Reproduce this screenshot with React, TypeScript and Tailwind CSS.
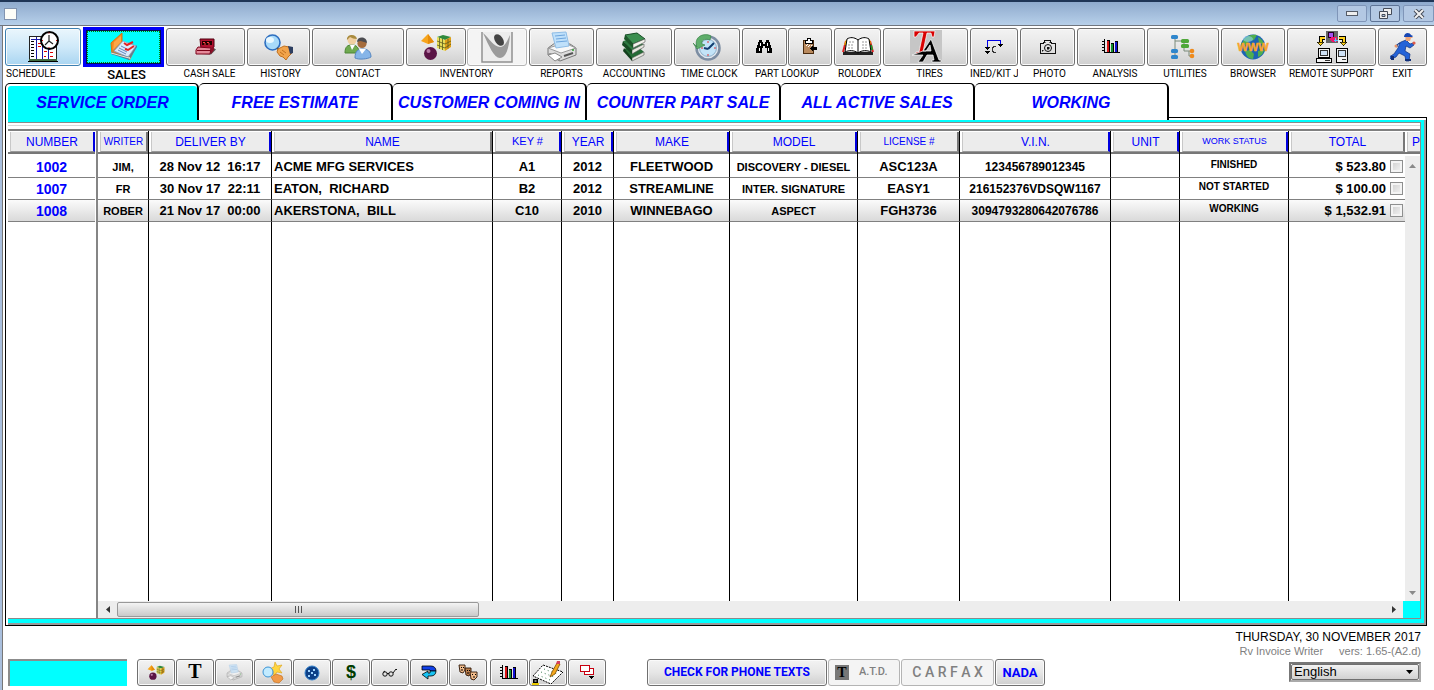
import React, { useState } from 'react';
import clsx from 'clsx';
import { twMerge } from 'tailwind-merge';

/* ---------- Toolbar drawings ---------- */

const ScheduleIcon = () => (
  <svg width="32" height="32" viewBox="0 0 32 32" shapeRendering="crispEdges">
    <rect x="2" y="5" width="27" height="24" fill="#fff" stroke="#222" />
    <path d="M2 28h28v2H2z" fill="#3f6b3f" />
    <path d="M1 30h30v1H1z" fill="#000" />
    <path d="M4 10.500h3M4 13.500h3M4 16.500h3M4 19.500h3M4 22.500h3M4 25.500h3" stroke="#000" />
    <path d="M9.500 6v22M15.500 6v22M4 8.500h11M21.500 18v10" stroke="#1a1aa8" />
    <path d="M11 12.500h3M11 15.500h3M17 20.500h3M23 21.500h3M17 25.500h2M23 25.500h3" stroke="#e00000" />
    <g shapeRendering="auto">
      <circle cx="22.500" cy="9.500" r="8.500" fill="#fff" stroke="#000" strokeWidth="2" />
      <path d="M22 4v6l-4 4M22 10l4 3" stroke="#222" strokeWidth="1.200" fill="none" />
      <path d="M22 1.500v1M22 16v1M15 9.500h1M29 9.500h1" stroke="#c00" />
    </g>
  </svg>
);

const SalesIcon = () => (
  <svg width="28" height="30" viewBox="0 0 28 30">
    <path d="M1 11 12 1v13L2 22z" fill="#f58a1e" stroke="#d8720f" />
    <path d="m4 10 7-6v10l-8 6z" fill="#fba748" />
    <path d="M1 20 12 9l15 5-7 14z" fill="#c9843c" />
    <path d="m4 19 9-10 13 5-8 11z" fill="#dcebfb" stroke="#7fa3cf" strokeWidth=".8" />
    <path d="m19 28 8-13v-2l-8 12L1 20v2z" fill="#4d7fa5" />
    <path d="m19 25 1 2M1 21l18 5" stroke="#f6e8c8" />
    <path d="m8 18 8 4M9 16l8 4M11 14l6 3" stroke="#5f86bf" />
    <path d="m14 11 3 2 6-3M15 17l3 1 6-4" stroke="#e32222" strokeWidth="2" fill="none" />
  </svg>
);

const RegisterIcon = () => (
  <svg width="22" height="18" viewBox="0 0 22 18">
    <path d="m6 16 10 .5 5-5-3-2z" fill="#555" />
    <path d="M5 1h14v8l-3 2H6z" fill="#b01030" stroke="#500010" />
    <path d="M7 3h10v4H7z" fill="#200" />
    <path d="M8 4.500h2M12 4.500h2M9 6h2M13 6h2" stroke="#ff4040" />
    <path d="m3 9 13 1-1 6H1v-4z" fill="#e58a9a" stroke="#7a0018" />
    <path d="M2 12.500h13" stroke="#7a0018" />
    <path d="m16 10 3-2v4l-3 4z" fill="#8c1028" />
  </svg>
);

const HistoryIcon = () => (
  <svg width="32" height="26" viewBox="0 0 32 26">
    <circle cx="9.500" cy="8.500" r="7.500" fill="#a8dafa" stroke="#2f6fc0" strokeWidth="1.600" />
    <ellipse cx="7" cy="6" rx="4" ry="3" fill="#e9f8ff" />
    <path d="m14 14 5 4" stroke="#555" strokeWidth="2" />
    <path d="m15 15 6-3 5 1 3 6-4 4-2 3-3-3-3-1-3-4z" fill="#f2a44c" stroke="#c07020" />
    <path d="m25 12 5 1v6l-3 1z" fill="#2d3e60" />
    <path d="m17 18 4 3M19 16l4 3" stroke="#c07020" />
  </svg>
);

const ContactIcon = () => (
  <svg width="28" height="26" viewBox="0 0 28 26">
    <path d="M1 19c0-7 3-8 7-8s7 2 7 8z" fill="#6faa4f" stroke="#4c8534" />
    <path d="m6 11 2 5 3-5z" fill="#fff" />
    <circle cx="8" cy="6" r="4.500" fill="#f0cfa0" />
    <path d="M3 6c-1-6 9-7 10-1-3 0-5-1-7-2-1 1-2 2-3 3z" fill="#a98b3e" />
    <path d="M11 24c0-7 3-9 8-9 4 0 8 2 8 8-3 2-12 3-16 1z" fill="#86b5e8" stroke="#5686c0" />
    <path d="m15 15 3 5 4-5z" fill="#fff" />
    <circle cx="18" cy="9.500" r="4.600" fill="#a56c3c" />
    <path d="M13 8c0-6 10-6 10 1-3-1-5-2-7-2z" fill="#4c4c50" />
  </svg>
);

const ShapesIcon = ({ width = 32, height = 28 }: { width?: number; height?: number }) => (
  <svg width={width} height={height} viewBox="0 0 32 28">
    <path d="m1 8 7-7 6 8-6 2z" fill="#f7a51c" />
    <path d="m8 1 6 8-6 2z" fill="#e58b0c" />
    <circle cx="10.500" cy="20.500" r="6.500" fill="#5b1446" />
    <circle cx="8.500" cy="18" r="2" fill="#b77aa6" />
    <path d="m17 4 6-2 8 2-6 3z" fill="#2e8a3c" />
    <path d="m17 4 8 3v11l-8-3z" fill="#e8df5a" />
    <path d="m25 7 6-3v10l-6 4z" fill="#e0a018" />
    <path d="M19.500 5v11M22.500 6v11M17 8l8 3 6-3M17 12l8 3 6-4M28 5.500v10" stroke="#5b5a20" strokeWidth=".8" fill="none" />
  </svg>
);

const FigureIcon = () => (
  <svg width="34" height="34" viewBox="0 0 34 34">
    <path d="M2 2h30v30H2z" fill="#ededed" />
    <path d="M2 2v30h30V2" fill="none" stroke="#909090" strokeWidth="1.500" />
    <path d="M3 3c6 5 11 14 17 14 5 0 7-6 10-12-1 13-4 23-10 23S9 16 3 3z" fill="#9b9b9b" />
    <ellipse cx="19" cy="10" rx="4" ry="6.500" transform="rotate(-35 19 10)" fill="#444" />
  </svg>
);

const PrinterIcon = ({ size = 32 }: { size?: number }) => (
  <svg width={size} height={size} viewBox="0 0 32 32">
    <path d="m2 17 7-5 15 1 6 4v7l-16 6-12-6z" fill="#dcdcdc" stroke="#777" />
    <path d="m2 17 13 5 15-5-7-3-14 1z" fill="#f8f8f8" stroke="#999" />
    <path d="m6 2 14-1 3 14-13 2z" fill="#bfe0fa" stroke="#8fbde6" />
    <path d="m9 5 10-1M10 8l10-1M10 11l11-1" stroke="#6da5dd" />
    <path d="m4 22 10 4v3l-12-6z" fill="#8a8a8a" />
    <path d="m2 24 7-2 7 4-7 4z" fill="#fff" stroke="#888" />
    <path d="m18 25 9-3" stroke="#555" strokeWidth="2" />
    <circle cx="27" cy="19" r="1" fill="#2ca02c" />
  </svg>
);

const BooksIcon = () => (
  <svg width="26" height="30" viewBox="0 0 26 30">
    <path d="m3 17 12-4 8 7-12 8z" fill="#256b35" />
    <path d="m11 26 12-6v3l-12 6z" fill="#e8e8e0" stroke="#555" strokeWidth=".6" />
    <path d="m3 16 8 10v3L2 19z" fill="#123f1c" />
    <path d="m2 9 13-3 8 7-12 7z" fill="#2d7a40" />
    <path d="m11 18 12-6v3l-12 7z" fill="#e8e8e0" stroke="#555" strokeWidth=".6" />
    <path d="m2 9 9 9v4L1 13z" fill="#164a22" />
    <path d="m4 3 12-2 8 6-12 5z" fill="#3b8f50" stroke="#174d25" />
    <path d="m12 12 12-5v3l-12 6z" fill="#f3f3ec" stroke="#555" strokeWidth=".6" />
    <path d="m4 3 8 9v4L3 7z" fill="#1c5729" />
  </svg>
);

const TimeClockIcon = () => (
  <svg width="28" height="28" viewBox="0 0 28 28">
    <circle cx="15" cy="15" r="11.500" fill="#e2e8ef" stroke="#7d8ea3" strokeWidth="2.500" />
    <circle cx="15" cy="15" r="8.500" fill="#c3e4f8" stroke="#8fb2cc" />
    <path d="M15 16 21 10M15 16l-4-1" stroke="#123d70" strokeWidth="2" />
    <path d="M15 8v2M15 21v2M8 15h2M21 15h2" stroke="#d33" />
    <path d="M4 14C0 4 11-1 18 3l-1 4C11 5 8 8 9 11l3 1-8 4-4-6z" fill="#5fae6b" stroke="#3b8549" strokeWidth=".7" />
  </svg>
);

const BinocularsIcon = () => (
  <svg width="16" height="14" viewBox="0 0 16 14" shapeRendering="crispEdges">
    <path d="M3 0h3v2h1v2h2V2h1V0h3v2h1v3h1v3h1v5h-5V8H9V6H7v2H6v5H0V8h1V5h1V2h1z" fill="#000" />
    <path d="M4.500 3v3M3.500 8v3M11.500 3v3M12.500 8v3" stroke="#fff" />
  </svg>
);

const ClipboardIcon = () => (
  <svg width="14" height="17" viewBox="0 0 14 17" shapeRendering="crispEdges">
    <rect x="0.500" y="2.500" width="10" height="13" fill="#b98a5e" stroke="#4a2c10" />
    <path d="M4 0h3v2h2v3H2V2h2z" fill="#fff" stroke="#000" />
    <path d="m3 8 2-2M5 9l2-2M8 7l1 1" stroke="#fff" />
    <path d="M14 9v3H10v2l-3-3.500L10 7v2z" fill="#000" />
  </svg>
);

const RolodexIcon = () => (
  <svg width="32" height="20" viewBox="0 0 32 20">
    <path d="M1 15h30v3H1z" fill="#222" />
    <path d="M4 4 1 15M28 4l3 11" stroke="#e02020" strokeWidth="2" />
    <path d="m5 3-2 5M27 3l1 4" stroke="#f2b400" strokeWidth="2" />
    <path d="m29 8 1 5" stroke="#1d9a2c" strokeWidth="2" />
    <path d="M16 3C12 0 8 0 5 2L3 15c4-2 9-2 13 1 4-3 9-3 13-1L27 2c-3-2-7-2-11 1z" fill="#fff" stroke="#000" />
    <path d="M16 3v13" stroke="#000" />
    <path d="M7 5h5M6 8h6M6 11h6M20 5h5M20 8h6M20 11h6" stroke="#999" strokeDasharray="2 1" />
  </svg>
);

const TiresIcon = () => (
  <svg width="32" height="33" viewBox="0 0 32 33">
    <rect width="32" height="33" fill="#c6c6c6" />
    <path d="M4 1h21l-1 6h-2l-1-4h-4l-4 19h3v2H6v-2h3l4-19H9L6 7H4z" fill="#d80000" stroke="#fff" strokeWidth=".7" />
    <path d="m21 9 8 21h2v2h-9v-2h2l-1-5h-6l-4 7H8l5-7H2l11-4h8l-1-6-4 6h-3z" fill="#000" stroke="#fff" strokeWidth=".7" />
  </svg>
);

const KitIcon = () => (
  <svg width="20" height="16" viewBox="0 0 20 16" shapeRendering="crispEdges">
    <path d="M3.500 8V1.500h13V5" fill="none" stroke="#0000e8" />
    <path d="M1 8h5L3.500 11zM1 12h5L3.500 15zM14 5h5l-2.500 3z" fill="#000" />
    <path d="M12 7.500H9.500V8H8.500v4h1v1.500H12" fill="none" stroke="#333" />
  </svg>
);

const CameraIcon = () => (
  <svg width="18" height="16" viewBox="0 0 18 16" shapeRendering="crispEdges">
    <path d="M1.500 4.500h3l1-2v-1h6v1l1 2h4v10h-15z" fill="none" stroke="#111" />
    <circle cx="9" cy="9" r="3.500" fill="none" stroke="#111" shapeRendering="auto" />
    <path d="M8 8h2v2H8zM6 3h1M10 3h1M3 11h1v1H3z" fill="#111" stroke="#111" strokeWidth=".5" />
  </svg>
);

const BarsIcon = () => (
  <svg width="18" height="15" viewBox="0 0 18 15" shapeRendering="crispEdges">
    <path d="M2.500 0v13.500H18M0 2.500h2M0 5.500h2M0 8.500h2M0 11.500h2" stroke="#000" fill="none" />
    <path d="M5 1h3v12H5zM9 4h3v9H9zM13 2h3v11h-3z" fill="#000" />
    <path d="M5 2h2v11H5z" fill="#d81414" />
    <path d="M9 5h2v8H9z" fill="#12902c" />
    <path d="M13 3h2v10h-2z" fill="#1010d0" />
  </svg>
);

const UtilitiesIcon = () => (
  <svg width="24" height="26" viewBox="0 0 24 26">
    <path d="M4 3v19M4 7h8M13 8v9M13 17h5v5h2M18 17h2" stroke="#7a8a7a" fill="none" />
    <rect x="0" y="1" width="7" height="4" rx="1.500" fill="#2f86cc" />
    <rect x="10" y="5" width="8" height="4" rx="1.500" fill="#4fa83a" />
    <rect x="10" y="10" width="8" height="4" rx="1.500" fill="#4fa83a" />
    <rect x="0" y="15" width="7" height="4" rx="1.500" fill="#2f86cc" />
    <rect x="0" y="21" width="7" height="4" rx="1.500" fill="#2f86cc" />
    <circle cx="21" cy="17" r="2.300" fill="#ee8a1c" />
    <circle cx="21" cy="22" r="2.300" fill="#ee8a1c" />
  </svg>
);

const BrowserIcon = () => (
  <svg width="34" height="28" viewBox="0 0 34 28">
    <circle cx="17" cy="14" r="12.500" fill="#1c64b4" />
    <path d="M8 6c4-4 9-5 13-4l-3 5-5 1-3 4-4-1zM22 4c4 2 6 5 6 8l-5-2zM9 18l5-1 4 4-1 5c-4 0-7-3-8-8zM22 18l6-1c-1 4-3 6-6 7z" fill="#4fae4e" />
    <ellipse cx="12" cy="6" rx="5" ry="3" fill="#8fd0f2" opacity=".6" />
    <text x="17" y="18" textAnchor="middle" fontFamily="Liberation Sans, Arial, sans-serif" fontWeight="bold" fontSize="11" fill="#f9a52c" stroke="#f9a52c" strokeWidth=".5">WWW</text>
  </svg>
);

const RemoteIcon = () => (
  <svg width="32" height="32" viewBox="0 0 32 32" shapeRendering="crispEdges">
    <path d="M10 0h12v12H10z" fill="#666" />
    <circle cx="15" cy="4" r="3" fill="#a34ff0" stroke="#202" />
    <path d="M16 6h5v5h-5zM13 8l3-2v5z" fill="#f0146c" />
    <path d="M19.500 7v4M18 9.500h4" stroke="#50c8ff" />
    <path d="M9 6.500H4.500V12M23 6.500h4.500V12" stroke="#000" strokeWidth="4" fill="none" />
    <path d="M9 6.500H4.500V12M23 6.500h4.500V12" stroke="#ffd21c" strokeWidth="2" fill="none" />
    <path d="M1 11h7l-3.500 4zM24 11h7l-3.500 4z" fill="#ffd21c" stroke="#000" strokeWidth=".7" />
    <path d="M2.500 17.500h11v9h-11zM.500 27.500h15v4H.500zM20.500 17.500h11v14h-11z" fill="#f2f2f2" stroke="#000" />
    <path d="M4.500 19.500h7v5h-7zM22.500 19.500h7v6h-7z" fill="#cfe2f6" stroke="#333" />
    <path d="M9 29.500h5M26 28.500h4" stroke="#333" />
  </svg>
);

const RunnerIcon = () => (
  <svg width="26" height="30" viewBox="0 0 26 30">
    <path d="M11 10 16 8l4 4 3-1 1 2-4 3-4-2-1 5 5 3-1 7h-3l-1-5-6-3-3 4-5 2-2-2 5-3 4-6 2-5-2 1-1 3-2-1z" fill="#2463d8" stroke="#0c2f80" strokeWidth=".7" />
    <path d="M15 4c2-3 6-2 7 1l1 1h-2l-1 3h-4z" fill="#eea679" />
    <path d="M14 5c0-5 6-5 7-2l2 1-1 1z" fill="#1747b4" />
    <circle cx="24" cy="11" r="1.600" fill="#e05a48" />
    <circle cx="6" cy="14" r="1.500" fill="#e79468" />
    <path d="M1 24h3v4H1zM15 27h6v2h-6z" fill="#123078" />
  </svg>
);

/* ---------- Footer drawings ---------- */

const SearchStarIcon = () => (
  <svg width="22" height="22" viewBox="0 0 22 22">
    <path d="m13 0 2 4 5-1-3 4 3 4-5-1-3 4-1-5-4-2 5-2z" fill="#ffd640" stroke="#dca010" strokeWidth=".6" />
    <circle cx="6" cy="10" r="5" fill="#c2ebff" stroke="#3b93d4" />
    <path d="m9 15 5-3 6 2 1 3-4 4-5-1z" fill="#f09a48" stroke="#c06a18" strokeWidth=".6" />
  </svg>
);

const BallIcon = () => (
  <svg width="16" height="16" viewBox="0 0 16 16">
    <circle cx="8" cy="8" r="7" fill="#0c3f86" stroke="#3482cc" />
    <path d="M4 5h2v2H4zM9 4h2v2H9zM7 7h2v2H7zM4 10h2v2H4zM10 9h2v2h-2z" fill="#9fd4ff" />
  </svg>
);

const GlassesIcon = () => (
  <svg width="16" height="9" viewBox="0 0 16 9">
    <circle cx="3" cy="6" r="2.200" fill="none" stroke="#111" />
    <circle cx="9" cy="6" r="2.200" fill="none" stroke="#111" />
    <path d="M5 5.500h2M11 5l3-4 1 1M1 4.500 3 3" stroke="#111" fill="none" />
  </svg>
);

const ReturnIcon = () => (
  <svg width="16" height="15" viewBox="0 0 16 15">
    <path d="M1 1h9c3 0 5 2 5 5H9V5H1z" fill="#1040e8" stroke="#000" strokeWidth=".8" />
    <path d="M15 6c0 3-2 5-5 5H7v3L1 9.500 7 6v2h2V6z" fill="#18c4f4" stroke="#000" strokeWidth=".8" />
  </svg>
);

const FacesIcon = () => (
  <svg width="20" height="17" viewBox="0 0 20 17">
    <g stroke="#2b1405" strokeWidth=".9">
      <path d="M1 1h6v5L5 9 2 8z" fill="#f3bd8c" />
      <path d="M7 4h6v5l-2 3-3-1z" fill="#bd7f4c" />
      <path d="M12 8h7v5l-3 3-3-1z" fill="#f3bd8c" />
    </g>
    <path d="M3 3.500h1M5 3.500h1M3 6h2M9 6.500h1M11 6.500h1M9 9h2M14 10.500h1M17 10.500h1M15 13h2" stroke="#000" />
  </svg>
);

const NotesIcon = () => (
  <svg width="32" height="24" viewBox="0 0 32 24">
    <path d="m1 15 10-11 20 7-12 12z" fill="#fff" stroke="#000" strokeDasharray="2 1" />
    <path d="m6 14 12 5M9 11l13 5M12 8l13 5" stroke="#3b7d50" strokeDasharray="1 3" />
    <path d="m18 16 2-5 5-9 3 1-5 10z" fill="#f5a81c" stroke="#7a4a00" strokeWidth=".8" />
    <path d="m24 3 1-3h3v3z" fill="#d4405c" />
    <path d="M1 18h5v5H1z" fill="#000" />
    <path d="M0 22h7v2H0z" fill="#e8c800" />
    <path d="M2.500 19.500h2v1h-2z" fill="#fff" />
  </svg>
);

const CascadeIcon = () => (
  <svg width="16" height="15" viewBox="0 0 16 15" shapeRendering="crispEdges">
    <path d="M5.500 3.500h9v6h-9z" fill="#fff" stroke="#c80010" />
    <path d="M1.500.500h9v6h-9z" fill="#fff" stroke="#c80010" />
    <path d="M9 11h6l-3 3z" fill="#000" />
  </svg>
);

/* ---------- Data ---------- */

interface ToolGroup {
  label: string;
  size: string;
  align?: string;
  tools: { name: string; icon: React.ReactNode; disabled?: boolean }[];
}

const toolGroups: ToolGroup[] = [
  { label: 'SCHEDULE', size: 'basis-[76px]', align: 'text-left pl-px', tools: [{ name: 'Schedule', icon: <ScheduleIcon /> }] },
  { label: 'SALES', size: 'basis-[81px]', tools: [{ name: 'Sales', icon: <SalesIcon /> }] },
  { label: 'CASH SALE', size: 'basis-[79px]', align: 'text-center pl-2', tools: [{ name: 'Cash sale', icon: <RegisterIcon /> }] },
  { label: 'HISTORY', size: 'basis-[63px]', align: 'text-center pl-1', tools: [{ name: 'History', icon: <HistoryIcon /> }] },
  { label: 'CONTACT', size: 'basis-[92px]', tools: [{ name: 'Contact', icon: <ContactIcon /> }] },
  {
    label: 'INVENTORY',
    size: 'basis-[121px]',
    tools: [
      { name: 'Inventory', icon: <ShapesIcon /> },
      { name: 'Inventory vendor', icon: <FigureIcon />, disabled: true },
    ],
  },
  { label: 'REPORTS', size: 'basis-[65px]', tools: [{ name: 'Reports', icon: <PrinterIcon /> }] },
  { label: 'ACCOUNTING', size: 'basis-[76px]', tools: [{ name: 'Accounting', icon: <BooksIcon /> }] },
  { label: 'TIME CLOCK', size: 'basis-[66px]', align: 'text-center pl-1', tools: [{ name: 'Time clock', icon: <TimeClockIcon /> }] },
  {
    label: 'PART LOOKUP',
    size: 'basis-[90px]',
    tools: [
      { name: 'Find part', icon: <BinocularsIcon /> },
      { name: 'Part list', icon: <ClipboardIcon /> },
    ],
  },
  { label: 'ROLODEX', size: 'basis-[47px]', align: 'text-center pl-1', tools: [{ name: 'Rolodex', icon: <RolodexIcon /> }] },
  { label: 'TIRES', size: 'basis-[85px]', align: 'text-center pl-2', tools: [{ name: 'Tires', icon: <TiresIcon /> }] },
  { label: 'INED/KIT J', size: 'basis-[48px]', tools: [{ name: 'Combined/kit jobs', icon: <KitIcon /> }] },
  { label: 'PHOTO', size: 'basis-[55px]', align: 'text-center pl-1', tools: [{ name: 'Photo', icon: <CameraIcon /> }] },
  { label: 'ANALYSIS', size: 'basis-[68px]', align: 'text-center pl-2', tools: [{ name: 'Analysis', icon: <BarsIcon /> }] },
  { label: 'UTILITIES', size: 'basis-[72px]', align: 'text-center pl-1', tools: [{ name: 'Utilities', icon: <UtilitiesIcon /> }] },
  { label: 'BROWSER', size: 'basis-[64px]', tools: [{ name: 'Browser', icon: <BrowserIcon /> }] },
  { label: 'REMOTE SUPPORT', size: 'basis-[89px]', tools: [{ name: 'Remote support', icon: <RemoteIcon /> }] },
  { label: 'EXIT', size: 'basis-[49px]', tools: [{ name: 'Exit', icon: <RunnerIcon /> }] },
];

const tabs = ['SERVICE ORDER', 'FREE ESTIMATE', 'CUSTOMER COMING IN', 'COUNTER PART SALE', 'ALL ACTIVE SALES', 'WORKING'];

const columns = [
  { key: 'writer', title: 'WRITER', col: 'w-[51px]', head: 'text-[10px]', cell: 'text-center text-[11px]', edge: false },
  { key: 'deliver', title: 'DELIVER BY', col: 'w-[123px]', head: 'text-[12px]', cell: 'text-center text-[13px]', edge: true },
  { key: 'name', title: 'NAME', col: 'w-[221px]', head: 'text-[12px]', cell: 'pl-0.5 text-left text-[13px]', edge: false },
  { key: 'keyNo', title: 'KEY #', col: 'w-[69px]', head: 'text-[11px]', cell: 'text-center text-[13px]', edge: true },
  { key: 'year', title: 'YEAR', col: 'w-[52px]', head: 'text-[12px]', cell: 'text-center text-[13px]', edge: true },
  { key: 'make', title: 'MAKE', col: 'w-[116px]', head: 'text-[12px]', cell: 'text-center text-[13px]', edge: true },
  { key: 'model', title: 'MODEL', col: 'w-[128px]', head: 'text-[12px]', cell: 'text-center text-[11px]', edge: true },
  { key: 'license', title: 'LICENSE #', col: 'w-[102px]', head: 'text-[10px]', cell: 'text-center text-[13px]', edge: false },
  { key: 'vin', title: 'V.I.N.', col: 'w-[151px]', head: 'text-[12px]', cell: 'text-center text-[12px]', edge: true },
  { key: 'unit', title: 'UNIT', col: 'w-[69px]', head: 'text-[12px]', cell: 'text-center text-[12px]', edge: true },
  { key: 'status', title: 'WORK STATUS', col: 'w-[109px]', head: 'text-[9px]', cell: 'pb-1 text-center text-[10px]', edge: true },
] as const;

type ColumnKey = (typeof columns)[number]['key'];
type Order = Record<ColumnKey, string> & { number: string; total: string };

const orders: Order[] = [
  { number: '1002', writer: 'JIM,', deliver: '28 Nov 12  16:17', name: 'ACME MFG SERVICES', keyNo: 'A1', year: '2012', make: 'FLEETWOOD', model: 'DISCOVERY - DIESEL', license: 'ASC123A', vin: '123456789012345', unit: '', status: 'FINISHED', total: '$ 523.80' },
  { number: '1007', writer: 'FR', deliver: '30 Nov 17  22:11', name: 'EATON,  RICHARD', keyNo: 'B2', year: '2012', make: 'STREAMLINE', model: 'INTER. SIGNATURE', license: 'EASY1', vin: '216152376VDSQW1167', unit: '', status: 'NOT STARTED', total: '$ 100.00' },
  { number: '1008', writer: 'ROBER', deliver: '21 Nov 17  00:00', name: 'AKERSTONA,  BILL', keyNo: 'C10', year: '2010', make: 'WINNEBAGO', model: 'ASPECT', license: 'FGH3736', vin: '3094793280642076786', unit: '', status: 'WORKING', total: '$ 1,532.91' },
];

const quickTools = [
  { name: 'Inventory items', icon: <ShapesIcon width={18} height={17} /> },
  { name: 'Text', icon: <span className="font-['Liberation_Serif',serif] text-[20px] leading-5 font-bold">T</span> },
  { name: 'Print', icon: <PrinterIcon size={17} />, dim: true },
  { name: 'Search favourites', icon: <SearchStarIcon /> },
  { name: 'Bowling', icon: <BallIcon /> },
  { name: 'Payments', icon: <span className="text-[18px] leading-5 font-bold text-[#003c00]">$</span> },
  { name: 'View', icon: <GlassesIcon /> },
  { name: 'Return', icon: <ReturnIcon /> },
  { name: 'People', icon: <FacesIcon /> },
];

const extraTools = [
  { name: 'Chart', icon: <BarsIcon /> },
  { name: 'Notes', icon: <NotesIcon /> },
  { name: 'Windows', icon: <CascadeIcon /> },
];

/* ---------- Components ---------- */

const face = 'flex items-center justify-center overflow-hidden rounded-[3px] border border-[#707070] bg-linear-to-b from-[#f3f3f3] via-[#e6e6e6] to-[#cfcfcf] shadow-[inset_0_0_0_1px_#fafafa]';

const TitleBar = () => (
  <header className="flex h-[26px] shrink-0 items-center justify-between border-t-2 border-b border-t-[#1f3556] border-b-[#70767f] bg-linear-to-b from-[#8faacd] to-[#b7d0ea] pl-1">
    <div className="h-3 w-[13px] border border-[#8294b0] bg-[#fdfdf8]" />
    <div className="flex gap-[3px]">
      <button aria-label="Minimize" className="flex h-[17px] w-[30px] items-center justify-center rounded-[2px] border border-[#7f95b8] bg-[#b3c8e3]">
        <svg width="12" height="6" viewBox="0 0 12 6"><rect x=".5" y=".5" width="11" height="4" fill="#eee" stroke="#555c68" /></svg>
      </button>
      <button aria-label="Restore" className="flex h-[17px] w-[30px] items-center justify-center rounded-[2px] border border-[#5d7396] bg-[#b3c8e3]">
        <svg width="13" height="11" viewBox="0 0 13 11">
          <path d="M4.500.500h8v6h-8z" fill="#eee" stroke="#444b58" />
          <path d="M.500 3.500h8v7h-8z" fill="#eee" stroke="#444b58" />
          <path d="M3 6.500h3v2H3z" fill="#b3c8e3" stroke="#444b58" />
        </svg>
      </button>
      <button aria-label="Close" className="flex h-[17px] w-[31px] items-center justify-center rounded-[2px] border border-[#7f95b8] bg-[#b3c8e3]">
        <svg width="12" height="10" viewBox="0 0 12 10">
          <path d="m2 1 8 8M10 1 2 9" stroke="#444b58" strokeWidth="4" />
          <path d="m2 1 8 8M10 1 2 9" stroke="#f0f0f0" strokeWidth="2" />
        </svg>
      </button>
    </div>
  </header>
);

const Toolbar = () => (
  <nav className="flex h-[57px] shrink-0 gap-0.5 pr-[7px] pl-0.5">
    {toolGroups.map((group) => {
      const active = group.label === 'SALES';
      return (
        <div key={group.label} className={clsx('flex min-w-0 grow flex-col', group.size)}>
          <div className="flex h-[41px] items-center gap-px">
            {group.tools.map((tool) => (
              <button
                key={tool.name}
                aria-label={tool.name}
                disabled={tool.disabled}
                className={twMerge(
                  'min-w-0 flex-1',
                  active
                    ? 'flex h-10 items-center justify-center border-[3px] border-[#0000f8] bg-[#00ffff] shadow-[inset_0_0_0_1px_#001050] outline-1 -outline-offset-5 outline-dotted outline-[#008000]'
                    : clsx(face, 'h-[38px]'),
                  group.label === 'SCHEDULE' && 'border-[#3c7fb1] from-[#eaf6fd] via-[#cfe9f9] to-[#a9d5f1]',
                  tool.disabled && 'border-[#b4b4b4] from-[#f4f4f4] via-[#f4f4f4] to-[#f4f4f4]',
                )}
              >
                <span className="shrink-0">{tool.icon}</span>
              </button>
            ))}
          </div>
          <div
            className={clsx(
              "overflow-hidden font-['Roboto',sans-serif] whitespace-nowrap",
              active ? 'pl-1.5 text-[13px] leading-4 font-medium' : 'text-[10px] leading-[14px]',
              group.align ?? 'text-center',
            )}
          >
            {group.label}
          </div>
        </div>
      );
    })}
  </nav>
);

const HeaderCell = ({ title, size, edge }: { title: string; size: string; edge: boolean }) => (
  <div className="border-b-2 border-[#777] pt-px pl-0.5">
    <div
      className={clsx(
        'flex h-5 items-center justify-center overflow-hidden border-r-2 border-b border-l border-b-[#999] border-l-[#c8c8c8] bg-[#ececec] font-normal whitespace-nowrap text-[#0000ff]',
        edge ? 'border-r-[#0000e0]' : 'border-r-[#777]',
        size,
      )}
    >
      {title}
    </div>
  </div>
);

const rowTone = (index: number) => (index === 2 ? 'bg-linear-to-b from-[#fbfbfb] to-[#d8d8d8]' : 'bg-white');

const OrderGrid = () => (
  <div className="flex min-h-0 flex-1">
    {/* Frozen number column */}
    <div className="w-[90px] shrink-0 border-r-2 border-[#858585] pr-px">
      <table className="w-full border-separate border-spacing-0">
        <thead>
          <tr className="h-[25px]">
            <th className="p-0 pb-0.5"><HeaderCell title="NUMBER" size="text-[12px]" edge /></th>
          </tr>
        </thead>
        <tbody>
          {orders.map((order, index) => (
            <tr key={order.number} className={clsx('h-[22px]', rowTone(index))}>
              <td className="border-b border-[#808080] p-0 text-center text-[14px] leading-5 font-bold text-[#0000ff]">{order.number}</td>
            </tr>
          ))}
        </tbody>
      </table>
    </div>

    <div className="flex min-w-0 flex-1 flex-col">
      <div className="flex min-h-0 flex-1">
        <table className="h-full min-w-0 flex-1 table-fixed border-separate border-spacing-0">
          <colgroup>
            {columns.map((column) => (
              <col key={column.key} className={column.col} />
            ))}
            <col className="w-[116px]" />
          </colgroup>
          <thead>
            <tr className="h-[25px]">
              {columns.map((column) => (
                <th key={column.key} className="border-r border-black p-0 pb-0.5">
                  <HeaderCell title={column.title} size={column.head} edge={column.edge} />
                </th>
              ))}
              <th className="p-0 pb-0.5"><HeaderCell title="TOTAL" size="text-[12px]" edge={false} /></th>
            </tr>
          </thead>
          <tbody>
            {orders.map((order, index) => (
              <tr key={order.number} className={clsx('h-[22px]', rowTone(index))}>
                {columns.map((column) => (
                  <td
                    key={column.key}
                    className={clsx('overflow-hidden border-r border-b border-r-black border-b-[#808080] p-0 leading-4 font-bold whitespace-pre', column.cell)}
                  >
                    {order[column.key]}
                  </td>
                ))}
                <td className="border-b border-[#808080] p-0 text-[13px] leading-4 font-bold">
                  <div className="flex items-center justify-end gap-1 pr-0.5">
                    <span>{order.total}</span>
                    <input
                      type="checkbox"
                      aria-label={`Select order ${order.number}`}
                      className="h-[13px] w-[13px] appearance-none border border-[#8e8f8f] bg-linear-to-br from-[#cdcdcd] to-[#f6f6f6] shadow-[inset_0_0_0_2px_#f4f4f4] checked:bg-[#0000f0]"
                    />
                  </div>
                </td>
              </tr>
            ))}
            <tr>
              {columns.map((column) => (
                <td key={column.key} className="border-r border-black p-0" />
              ))}
              <td className="p-0" />
            </tr>
          </tbody>
        </table>

        <div className="flex w-[15px] shrink-0 flex-col">
          <div className="h-[25px] shrink-0 overflow-hidden">
            <div className="border-b-2 border-[#777] pt-px pl-0.5">
              <div className="h-5 overflow-hidden border-b border-l border-b-[#999] border-l-[#c8c8c8] bg-[#ececec] pl-1 text-[12px] leading-5 text-[#0000ff]">P</div>
            </div>
          </div>
          <div className="flex flex-1 flex-col justify-between bg-[#ededed]">
            <button aria-label="Scroll up" className="flex h-5 items-center justify-center">
              <svg width="7" height="4" viewBox="0 0 7 4"><path d="M0 4 3.500 0 7 4z" fill="#8a8a8a" /></svg>
            </button>
            <button aria-label="Scroll down" className="flex h-4 items-center justify-center">
              <svg width="7" height="4" viewBox="0 0 7 4"><path d="M0 0h7L3.500 4z" fill="#8a8a8a" /></svg>
            </button>
          </div>
        </div>
      </div>

      {/* Horizontal scroll bar */}
      <div className="flex h-[17px] shrink-0">
        <div className="flex flex-1 items-center bg-[#ededed]">
          <button aria-label="Scroll left" className="flex h-full w-[19px] items-center justify-center">
            <svg width="4" height="7" viewBox="0 0 4 7"><path d="M4 0v7L0 3.500z" fill="#333" /></svg>
          </button>
          <div className="flex flex-1">
            <div className="flex h-[15px] w-2/7 items-center justify-center gap-0.5 rounded-[2px] border border-[#999] bg-linear-to-b from-[#f4f4f4] to-[#cacaca]">
              <i className="h-[7px] w-px bg-[#555]" />
              <i className="h-[7px] w-px bg-[#555]" />
              <i className="h-[7px] w-px bg-[#555]" />
            </div>
          </div>
          <button aria-label="Scroll right" className="flex h-full w-[19px] items-center justify-center">
            <svg width="4" height="7" viewBox="0 0 4 7"><path d="M0 0v7l4-3.500z" fill="#333" /></svg>
          </button>
        </div>
        <div className="w-[17px] bg-[#00ffff]" />
      </div>
    </div>
  </div>
);

const Footer = ({ language, onLanguage }: { language: string; onLanguage: (value: string) => void }) => (
  <footer className="flex h-16 shrink-0 items-end pr-[13px] pb-1 pl-[5px]">
    <div className="mr-[10px] h-[27px] w-[119px] border-t-2 border-l-2 border-[#8c8c8c] bg-[#00ffff]" />
    <div className="mr-[3px] flex gap-px">
      {quickTools.map((tool) => (
        <button key={tool.name} aria-label={tool.name} className={clsx(face, 'h-[27px] w-[38px]')}>
          <span className={clsx(tool.dim && 'opacity-60')}>{tool.icon}</span>
        </button>
      ))}
    </div>
    <div className="flex gap-px">
      {extraTools.map((tool) => (
        <button key={tool.name} aria-label={tool.name} className={clsx(face, 'h-[27px] w-[38px]')}>
          {tool.icon}
        </button>
      ))}
    </div>
    <div className="ml-[41px] flex gap-px">
      <button className={clsx(face, "h-[27px] w-[180px] pb-px font-['Roboto',sans-serif] text-[12px] font-bold text-[#0000ff]")}>CHECK FOR PHONE TEXTS</button>
      <button disabled className="flex h-[27px] w-[72px] items-center gap-2.5 rounded-[3px] border border-[#b4b4b4] bg-[#f4f4f4] pl-1.5 font-['Roboto',sans-serif] text-[11px] font-medium text-[#808080]">
        <span className="flex h-[15px] w-[14px] items-center justify-center bg-[#777] font-['Liberation_Serif',serif] text-[14px] font-bold text-black">T</span>
        A.T.D.
      </button>
      <button disabled className="h-[27px] w-[93px] rounded-[3px] border border-[#b4b4b4] bg-[#f4f4f4] font-['Roboto',sans-serif] text-[14px] font-medium text-[#808080]">C A R F A X</button>
      <button className={clsx(face, "h-[27px] w-[50px] font-['Roboto',sans-serif] text-[13px] font-bold text-[#0000ff]")}>NADA</button>
    </div>
    <div className="mb-1 ml-auto flex flex-col items-end">
      <div className="text-[12px] leading-4">THURSDAY, 30 NOVEMBER 2017</div>
      <div className="flex gap-4 text-[11px] leading-[13px] text-[#808080]">
        <span>Rv Invoice Writer</span>
        <span>vers: 1.65-(A2.d)</span>
      </div>
      <div className="mt-1 grid w-[132px] border-2 border-[#777] border-r-[#aaa] border-b-[#aaa]">
        <select
          aria-label="Language"
          value={language}
          onChange={(e) => onLanguage(e.target.value)}
          className="col-start-1 row-start-1 h-4 appearance-none rounded-[2px] border border-[#707070] bg-linear-to-b from-[#f2f2f2] to-[#d2d2d2] pl-0.5 text-[13px] leading-[14px]"
        >
          <option>English</option>
          <option>French</option>
          <option>Spanish</option>
        </select>
        <svg className="pointer-events-none col-start-1 row-start-1 mr-1.5 self-center justify-self-end" width="7" height="4" viewBox="0 0 7 4">
          <path d="M0 0h7L3.500 4z" fill="#000" />
        </svg>
      </div>
    </div>
  </footer>
);

const App: React.FC = () => {
  const [activeTab, setActiveTab] = useState(0);
  const [language, setLanguage] = useState('English');

  return (
    <div className="flex h-screen flex-col overflow-hidden bg-[#a9bfdd] font-['Liberation_Sans',Arial,sans-serif] text-black">
      <TitleBar />
      <main className="ml-0.5 flex min-h-0 flex-1 flex-col border-l border-[#777] bg-white">
        <Toolbar />

        {/* Tabs */}
        <div className="mr-[7px] ml-0.5 flex h-[37px] shrink-0">
          {tabs.map((tab, index) => (
            <button
              key={tab}
              onClick={() => setActiveTab(index)}
              className={clsx(
                'flex w-[194px] shrink-0 rounded-t-[5px] border-t border-r-2 border-black bg-white pt-0.5 text-[16px] font-bold whitespace-nowrap text-[#0000ff] italic',
                index === 0 && 'border-l',
                index === activeTab && 'pl-0.5',
              )}
            >
              <span className={clsx('flex h-full flex-1 items-center justify-center rounded-t-[3px]', index === activeTab && 'bg-[#00ffff]')}>{tab}</span>
            </button>
          ))}
          <div className="flex flex-1 flex-col">
            <div className="h-[35px] border-b border-black" />
            <div className="flex-1 border-r border-black" />
          </div>
        </div>

        {/* Order list */}
        <section className="mr-[7px] ml-0.5 flex min-h-0 flex-1 flex-col border-r border-b border-l border-black pl-0.5">
          <div className="flex min-h-0 flex-1 flex-col border-r-2 border-b-2 border-[#999]">
            <div className="flex min-h-0 flex-1 flex-col border-t-2 border-r-[3px] border-b-4 border-[#00ffff]">
              <div className="flex min-h-0 flex-1 flex-col border border-l-0 border-[#8a8a8a]">
                <div className="h-2 shrink-0 border-b-2 border-[#808080] pt-0.5">
                  <div className="h-px bg-[#d8d8d8]" />
                </div>
                <OrderGrid />
              </div>
            </div>
          </div>
        </section>

        <Footer language={language} onLanguage={setLanguage} />
      </main>
    </div>
  );
};

export default App;
